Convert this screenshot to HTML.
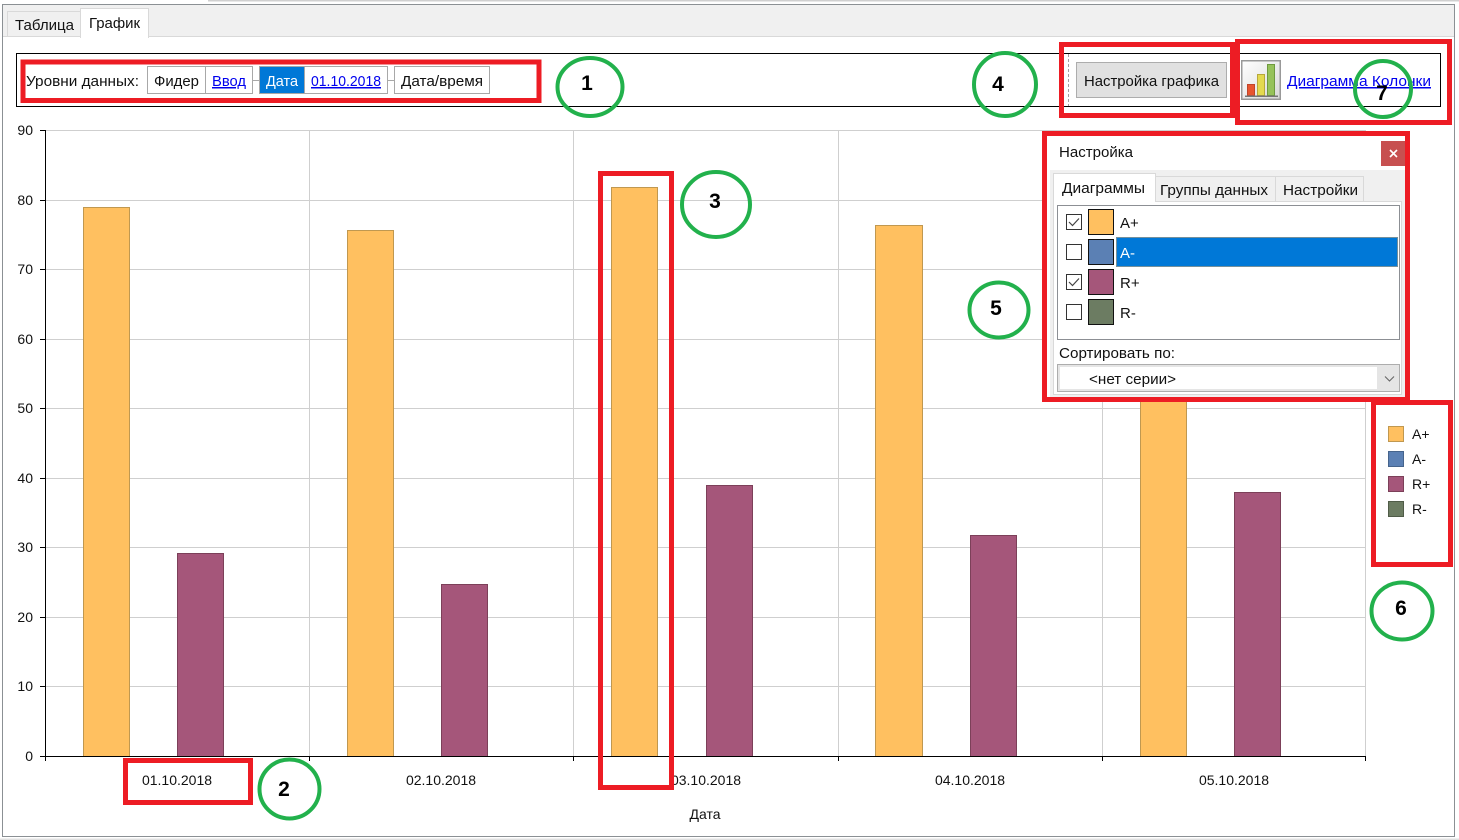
<!DOCTYPE html>
<html lang="ru"><head><meta charset="utf-8"><title>График</title>
<style>
html,body{margin:0;padding:0;background:#fff;width:1459px;height:840px;overflow:hidden}
svg{display:block;font-family:"Liberation Sans",sans-serif;font-size:15px}
text{fill:#111}
.l{fill:#0000ee;text-decoration:underline}
.n{font-weight:bold;font-size:21px;text-anchor:middle;fill:#000}
.r{fill:none;stroke:#ed1c24;stroke-width:5}
.g{fill:none;stroke:#22b14c;stroke-width:4}
.y{text-anchor:end;font-size:14px}
.x{text-anchor:middle;font-size:14px}
.o{fill:#ffc060;stroke:#c09850}
.p{fill:#a5567a;stroke:#7c4059}
.b{fill:#fff;stroke:#a8a8a8}
.tab{stroke:#d9d9d9}
</style></head><body>
<svg width="1459" height="840" viewBox="0 0 1459 840" xmlns="http://www.w3.org/2000/svg">
<rect x="208" y="0" width="1251" height="1.5" fill="#d0d0d0"/>
<rect x="0" y="838.5" width="1459" height="1.5" fill="#e0e0e0"/>
<rect x="2.5" y="4.5" width="1452" height="832" fill="#fff" stroke="#8b9094"/>
<rect x="3" y="5" width="1451" height="31.5" fill="#f0f0f0"/>
<line x1="3" y1="36.5" x2="1454" y2="36.5" stroke="#d9d9d9"/>
<rect x="7.5" y="11.5" width="73" height="25" fill="#f0f0f0" class="tab"/>
<text x="15" y="30" textLength="59" lengthAdjust="spacingAndGlyphs">Таблица</text>
<rect x="80.5" y="8.5" width="68" height="29" fill="#fff" class="tab"/>
<rect x="81" y="34" width="67" height="4" fill="#fff"/>
<text x="89" y="28" textLength="51" lengthAdjust="spacingAndGlyphs">График</text>

<rect x="16.5" y="53.5" width="1424" height="53" fill="#fff" stroke="#000"/>
<text x="26" y="86" textLength="113" lengthAdjust="spacingAndGlyphs">Уровни данных:</text>
<rect x="147.5" y="66.5" width="58" height="27" class="b"/>
<text x="154" y="86" textLength="45" lengthAdjust="spacingAndGlyphs">Фидер</text>
<rect x="205.5" y="66.5" width="47" height="27" class="b"/>
<text x="212" y="86" class="l" textLength="34" lengthAdjust="spacingAndGlyphs">Ввод</text>
<line x1="253" y1="80.5" x2="259" y2="80.5" stroke="#a8a8a8"/>
<rect x="259.5" y="66.5" width="128" height="27" class="b"/>
<rect x="259.5" y="66.5" width="45" height="27" fill="#0078d7" stroke="#a8a8a8"/>
<text x="266" y="86" style="fill:#fff" textLength="32" lengthAdjust="spacingAndGlyphs">Дата</text>
<text x="311" y="86" class="l" textLength="70" lengthAdjust="spacingAndGlyphs">01.10.2018</text>
<line x1="388" y1="80.5" x2="394" y2="80.5" stroke="#a8a8a8"/>
<rect x="394.5" y="66.5" width="95" height="27" class="b"/>
<text x="401" y="86" textLength="82" lengthAdjust="spacingAndGlyphs">Дата/время</text>

<line x1="1068.5" y1="54" x2="1068.5" y2="106" stroke="#a0a0a0" stroke-dasharray="3 2"/>
<rect x="1076.5" y="62.5" width="150" height="35" fill="#e1e1e1" stroke="#adadad"/>
<text x="1084" y="86" textLength="135" lengthAdjust="spacingAndGlyphs">Настройка графика</text>

<defs><linearGradient id="ig" x1="0" y1="0" x2="1" y2="1"><stop offset="0" stop-color="#fff"/><stop offset="1" stop-color="#d8d8d8"/></linearGradient></defs>
<rect x="1241.75" y="60.75" width="38.500" height="38.500" fill="url(#ig)" stroke="#999" stroke-width="1.500"/>
<rect x="1247.5" y="84.5" width="7" height="11" fill="#e8552f" stroke="#c0452a"/>
<rect x="1257.5" y="74.5" width="7" height="21" fill="#e3d94f" stroke="#b8a83a"/>
<rect x="1267.5" y="64.5" width="7" height="31" fill="#96c25a" stroke="#6f9a3e"/>
<rect x="1245" y="95.5" width="33" height="1.500" fill="#777"/>
<text x="1287" y="86" class="l" textLength="144" lengthAdjust="spacingAndGlyphs">Диаграмма Колонки</text>

<!-- chart grid -->
<g stroke="#cfcfcf" fill="none">
<path d="M45 130.500H1366M45 200.500H1366M45 269.500H1366M45 339.500H1366M45 408.500H1366M45 478.500H1366M45 547.500H1366M45 617.500H1366M45 686.500H1366"/>
<path d="M309.500 130V756M573.500 130V756M838.500 130V756M1102.500 130V756M1365.500 130V756"/>
</g>
<rect x="83.500" y="207.500" width="46" height="549" class="o"/>
<rect x="177.500" y="553.500" width="46" height="203" class="p"/>
<rect x="347.500" y="230.500" width="46" height="526" class="o"/>
<rect x="441.500" y="584.500" width="46" height="172" class="p"/>
<rect x="611.500" y="187.500" width="46" height="569" class="o"/>
<rect x="706.500" y="485.500" width="46" height="271" class="p"/>
<rect x="875.500" y="225.500" width="47" height="531" class="o"/>
<rect x="970.500" y="535.500" width="46" height="221" class="p"/>
<rect x="1140.500" y="380.500" width="46" height="376" class="o"/>
<rect x="1234.500" y="492.500" width="46" height="264" class="p"/>
<g stroke="#000" fill="none">
<path d="M45.500 130V761M40 756.500H1366"/>
<path d="M40 130.500H45M40 200.500H45M40 269.500H45M40 339.500H45M40 408.500H45M40 478.500H45M40 547.500H45M40 617.500H45M40 686.500H45"/>
<path d="M309.500 756V761M573.500 756V761M838.500 756V761M1102.500 756V761M1365.500 756V761"/>
</g>
<g class="labels">
<text x="33" y="135" class="y">90</text><text x="33" y="205" class="y">80</text>
<text x="33" y="274" class="y">70</text><text x="33" y="344" class="y">60</text>
<text x="33" y="413" class="y">50</text><text x="33" y="483" class="y">40</text>
<text x="33" y="552" class="y">30</text><text x="33" y="622" class="y">20</text>
<text x="33" y="691" class="y">10</text><text x="33" y="761" class="y">0</text>
<text x="177" y="785" class="x">01.10.2018</text>
<text x="441" y="785" class="x">02.10.2018</text>
<text x="706" y="785" class="x">03.10.2018</text>
<text x="970" y="785" class="x">04.10.2018</text>
<text x="1234" y="785" class="x">05.10.2018</text>
<text x="705" y="819" class="x">Дата</text>
</g>

<!-- legend -->
<rect x="1388.500" y="426.500" width="15" height="15" fill="#ffc060" stroke="#c09850"/>
<rect x="1388.500" y="451.500" width="15" height="15" fill="#5b80b4" stroke="#46648c"/>
<rect x="1388.500" y="476.500" width="15" height="15" fill="#a5567a" stroke="#7c4059"/>
<rect x="1388.500" y="501.500" width="15" height="15" fill="#6c7c62" stroke="#505c48"/>
<text x="1412" y="439" font-size="14">A+</text><text x="1412" y="464" font-size="14">A-</text>
<text x="1412" y="489" font-size="14">R+</text><text x="1412" y="514" font-size="14">R-</text>

<!-- settings panel -->
<rect x="1044" y="134" width="363" height="266" fill="#fff"/>
<text x="1059" y="157" textLength="74" lengthAdjust="spacingAndGlyphs">Настройка</text>
<rect x="1381" y="141" width="24" height="25" fill="#c75050"/>
<path d="M1390 150L1397 157M1397 150L1390 157" stroke="#fff" stroke-width="1.600"/>
<rect x="1050" y="170" width="355" height="228" fill="#f0f0f0"/>
<rect x="1053.500" y="201.500" width="348" height="193" fill="#fff" stroke="#d9d9d9"/>
<rect x="1155.500" y="176.500" width="120" height="25" fill="#f0f0f0" class="tab"/>
<rect x="1275.500" y="176.500" width="88" height="25" fill="#f0f0f0" class="tab"/>
<rect x="1053.500" y="173.500" width="102" height="28" fill="#fff" class="tab"/>
<rect x="1054" y="199" width="101" height="4" fill="#fff"/>
<text x="1062" y="193" textLength="83" lengthAdjust="spacingAndGlyphs">Диаграммы</text>
<text x="1160" y="195" textLength="108" lengthAdjust="spacingAndGlyphs">Группы данных</text>
<text x="1283" y="195" textLength="75" lengthAdjust="spacingAndGlyphs">Настройки</text>
<rect x="1057.500" y="205.500" width="342" height="134" fill="#fff" stroke="#8c8f94"/>

<rect x="1066.500" y="214.500" width="15" height="15" fill="#fff" stroke="#333"/>
<path d="M1069 222L1072.500 225.500L1079 218.500" fill="none" stroke="#444" stroke-width="1.200"/>
<rect x="1088.500" y="209.500" width="25" height="25" fill="#ffc060" stroke="#111"/>
<text x="1120" y="228">A+</text>

<rect x="1116" y="237" width="282" height="30" fill="#0078d7"/>
<rect x="1116.500" y="237.500" width="281" height="29" fill="none" stroke="#e8a860" stroke-dasharray="1 1"/>
<rect x="1066.500" y="244.500" width="15" height="15" fill="#fff" stroke="#333"/>
<rect x="1088.500" y="239.500" width="25" height="25" fill="#5b80b4" stroke="#111"/>
<text x="1120" y="258" style="fill:#fff">A-</text>

<rect x="1066.500" y="274.500" width="15" height="15" fill="#fff" stroke="#333"/>
<path d="M1069 282L1072.500 285.500L1079 278.500" fill="none" stroke="#444" stroke-width="1.200"/>
<rect x="1088.500" y="269.500" width="25" height="25" fill="#a5567a" stroke="#111"/>
<text x="1120" y="288">R+</text>

<rect x="1066.500" y="304.500" width="15" height="15" fill="#fff" stroke="#333"/>
<rect x="1088.500" y="299.500" width="25" height="25" fill="#6c7c62" stroke="#111"/>
<text x="1120" y="318">R-</text>

<text x="1059" y="358" textLength="116" lengthAdjust="spacingAndGlyphs">Сортировать по:</text>
<rect x="1057.500" y="364.500" width="342" height="27" fill="#e5e5e5" stroke="#adadad"/>
<rect x="1060" y="367" width="317" height="22" fill="#fff"/>
<text x="1089" y="384" textLength="87" lengthAdjust="spacingAndGlyphs">&lt;нет серии&gt;</text>
<path d="M1385 376.500L1389.500 381L1394 376.500" fill="none" stroke="#666" stroke-width="1.100"/>

<!-- red annotation boxes -->
<rect class="r" x="23" y="62" width="516" height="38.500"/>
<rect class="r" x="1061.500" y="44.500" width="171" height="71"/>
<rect class="r" x="1237.500" y="41.500" width="212" height="81"/>
<rect class="r" x="1044.500" y="133.500" width="363" height="266"/>
<rect class="r" x="1373.500" y="402.500" width="77" height="162"/>
<rect class="r" x="600.500" y="173.500" width="71" height="614"/>
<rect class="r" x="125.500" y="760.500" width="125" height="42"/>

<!-- green circles -->
<ellipse class="g" cx="590" cy="87" rx="32.500" ry="29"/>
<ellipse class="g" cx="289.500" cy="789" rx="30" ry="29.500"/>
<ellipse class="g" cx="716" cy="204.500" rx="34" ry="32.500"/>
<ellipse class="g" cx="1005" cy="84.500" rx="31" ry="31.500"/>
<ellipse class="g" cx="999" cy="310" rx="29.500" ry="27.500"/>
<ellipse class="g" cx="1402" cy="611" rx="30.500" ry="28.500"/>
<ellipse class="g" cx="1383" cy="89" rx="28" ry="28"/>
<text class="n" x="587" y="90">1</text>
<text class="n" x="284" y="796">2</text>
<text class="n" x="715" y="208">3</text>
<text class="n" x="998" y="91">4</text>
<text class="n" x="996" y="315">5</text>
<text class="n" x="1401" y="615">6</text>
<text class="n" x="1382" y="100">7</text>
</svg>
</body></html>
